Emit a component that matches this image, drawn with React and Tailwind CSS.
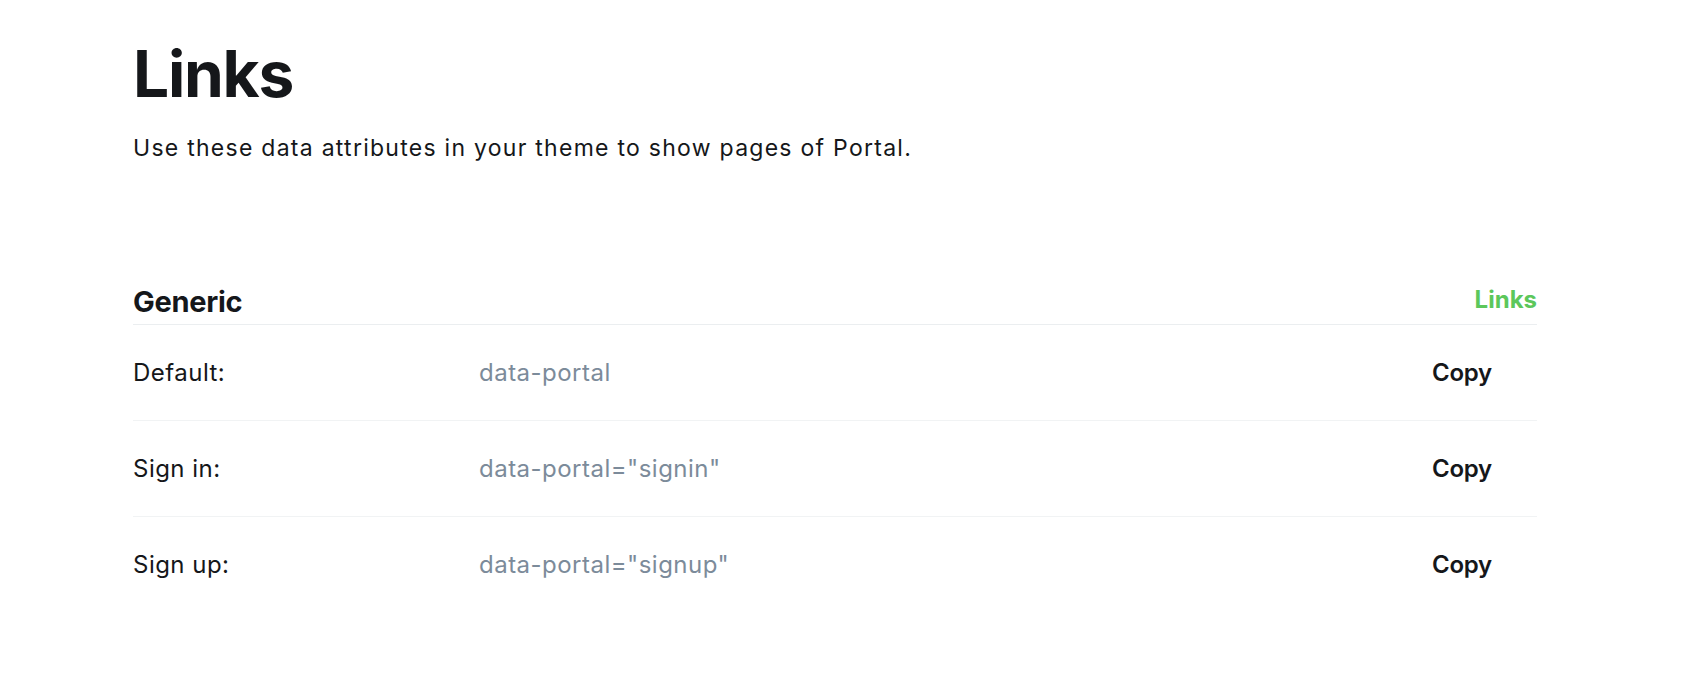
// data attribute rows
const rows = [
  { label: "Default:", value: "data-portal" },
  { label: "Sign in:", value: 'data-portal="signin"' },
  { label: "Sign up:", value: 'data-portal="signup"' },
];

export default function App() {
  return (
    <div className="min-h-screen bg-white font-['Inter',sans-serif] text-[#15171a]">
      <div className="ml-[133px] w-[1404px] pt-[42px]">
        {/* page heading */}
        <h1 className="text-[64px] font-bold leading-none tracking-[-0.02em]">Links</h1>
        <p className="mt-[26px] text-[23px] leading-[1.4] tracking-[0.055em]">
          Use these data attributes in your theme to show pages of Portal.
        </p>

        {/* generic section */}
        <div className="mt-[120px]">
          <div className="flex items-end justify-between border-b border-[#ebeef0] pb-[4px]">
            <h2 className="text-[29px] font-bold leading-[36px] tracking-[-0.01em]">Generic</h2>
            <span className="mb-[5px] text-[24px] font-bold leading-[30px] text-[#5cc75b]">Links</span>
          </div>

          {rows.map((row, i) => (
            <div
              key={row.label}
              className={
                i < rows.length - 1
                  ? "flex h-[96px] items-center border-b border-[#f1f3f4] text-[24px] tracking-[0.02em]"
                  : "flex h-[96px] items-center text-[24px] tracking-[0.02em]"
              }
            >
              <div className="w-[346px]">{row.label}</div>
              <div className="flex-1 text-[#7c8b9a]">{row.value}</div>
              <button className="mr-[45px] font-semibold tracking-[-0.01em]">Copy</button>
            </div>
          ))}
        </div>
      </div>
    </div>
  );
}
